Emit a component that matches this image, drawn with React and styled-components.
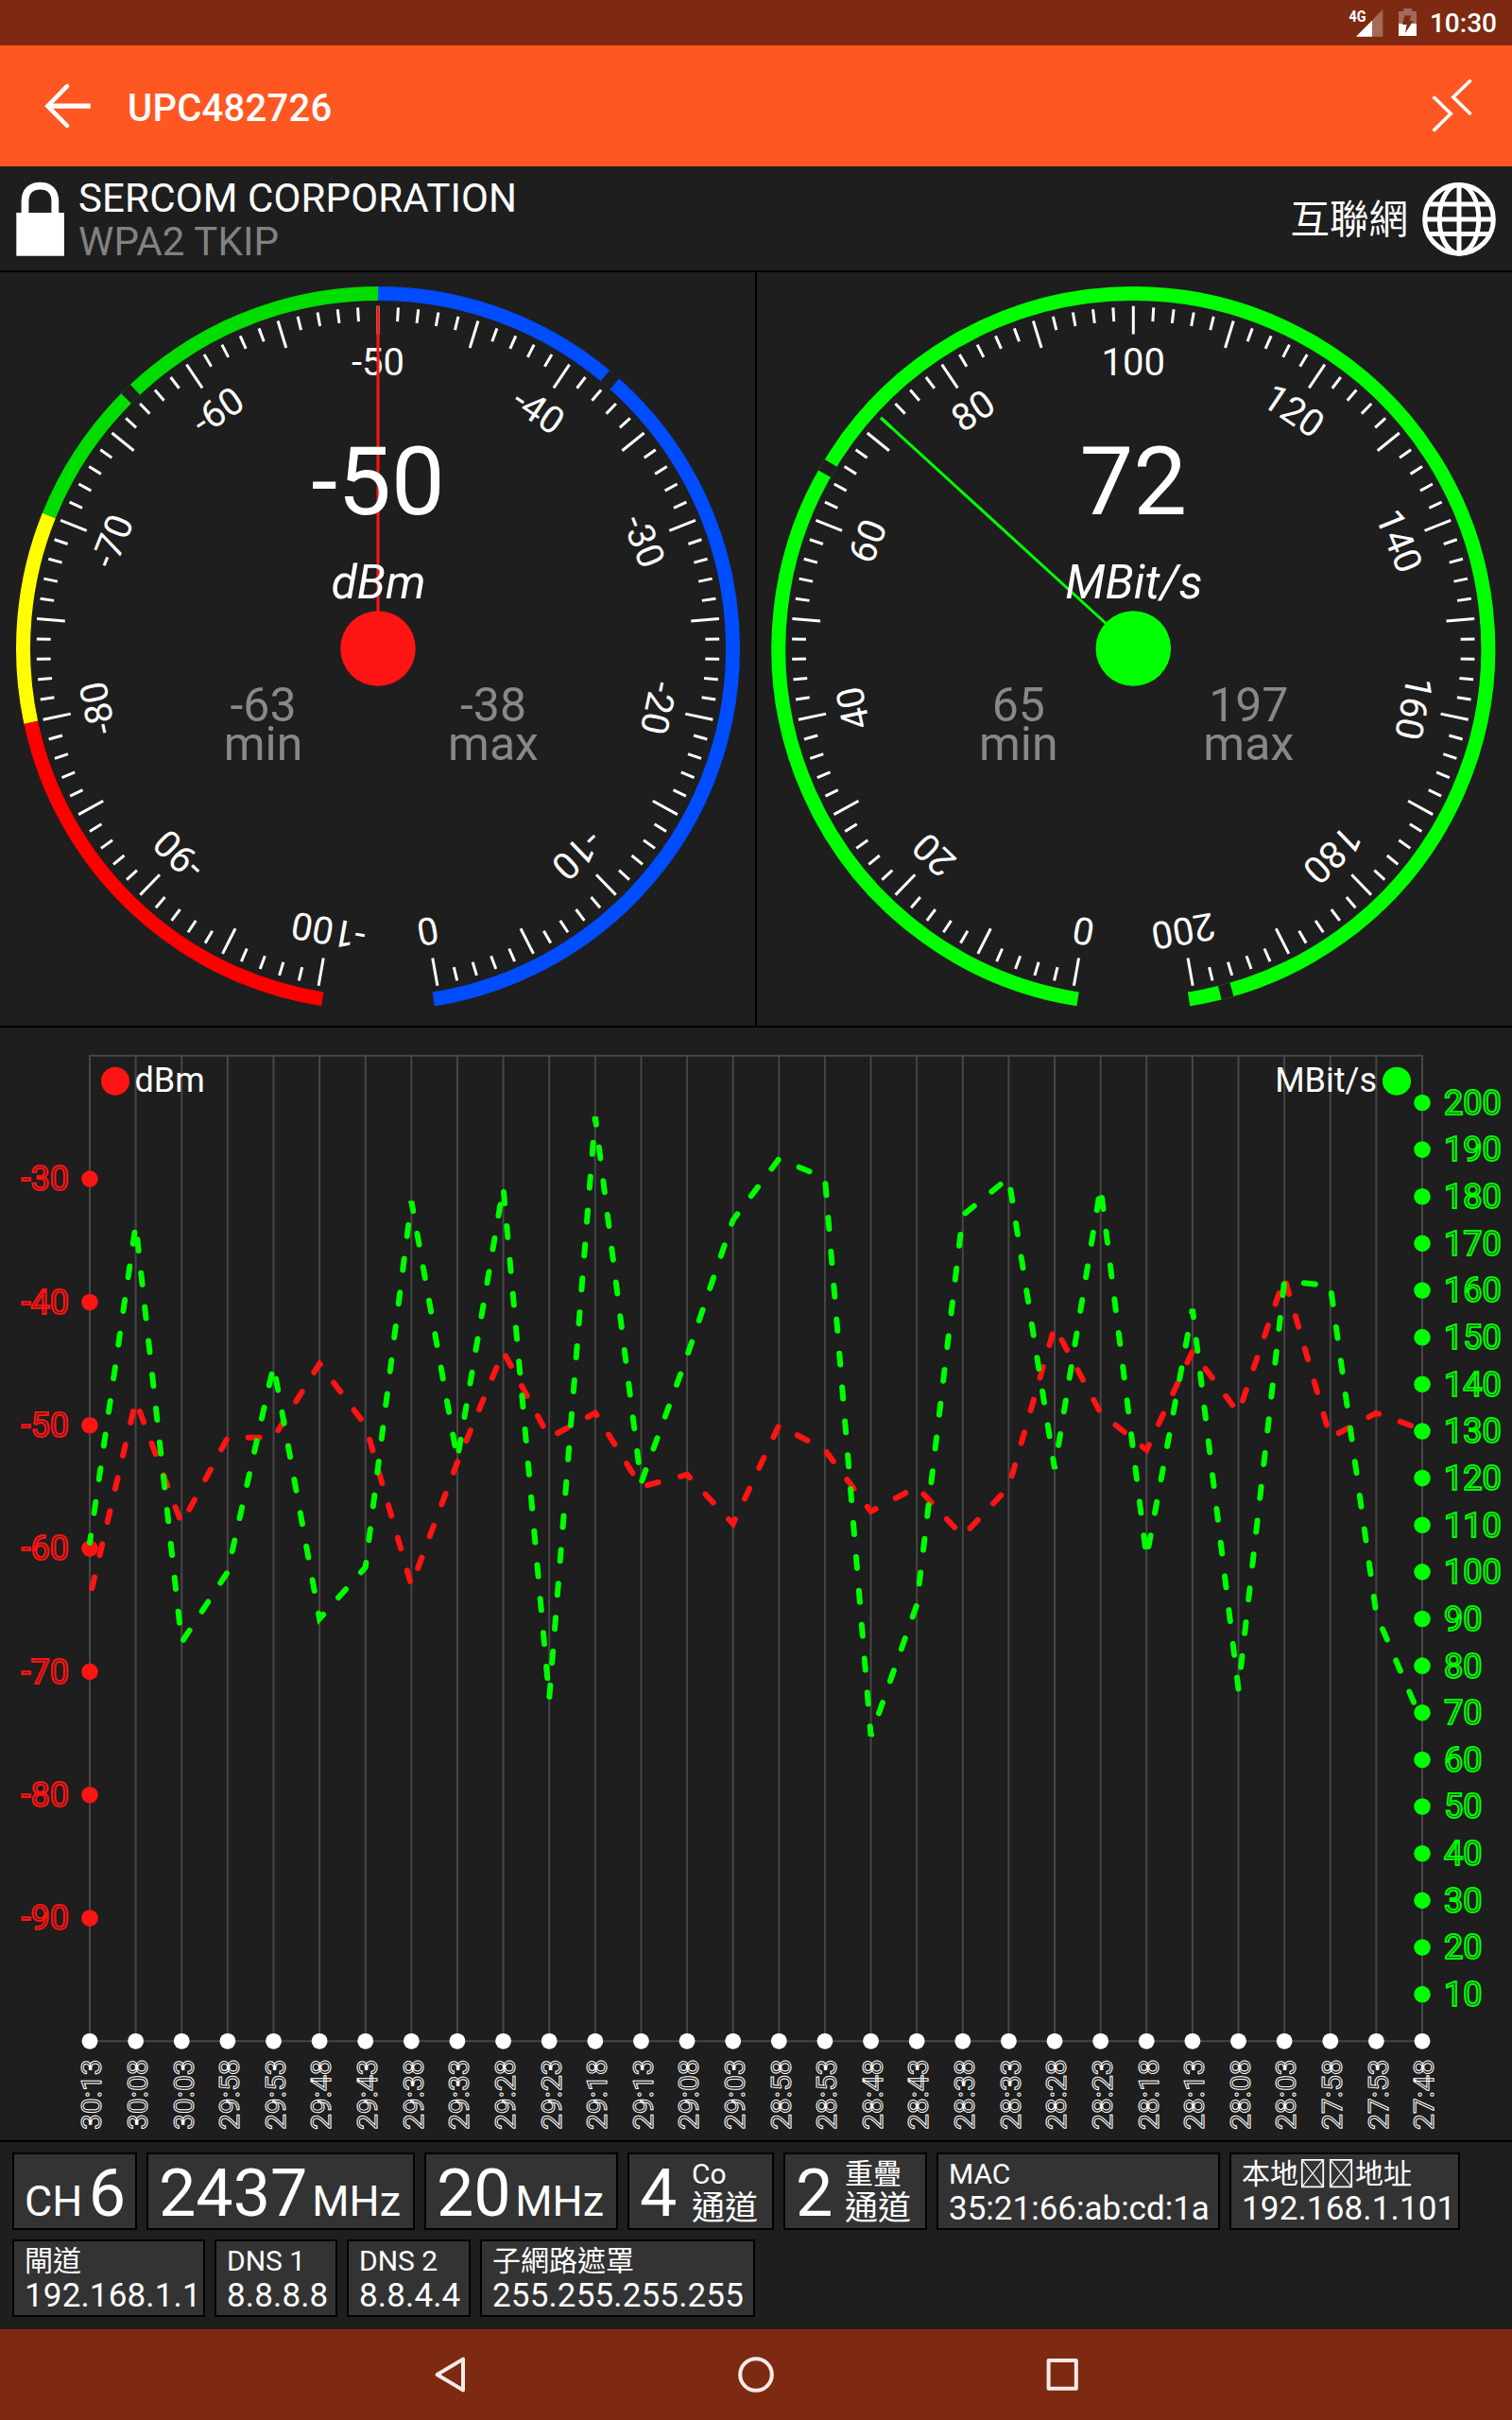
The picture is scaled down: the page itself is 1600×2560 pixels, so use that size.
import React from "react";
import styled, { createGlobalStyle } from "styled-components";

const FONT = `Roboto, "Noto Sans CJK TC", sans-serif`;
const BG = "#1e1e1e";

const GlobalStyle = createGlobalStyle`
  html, body { margin: 0; padding: 0; background: ${BG}; }
  * { box-sizing: border-box; }
`;

const Screen = styled.div`
  display: flex;
  flex-direction: column;
  width: 1600px;
  height: 2560px;
  overflow: hidden;
  background: ${BG};
  color: #fff;
  font-family: ${FONT};
`;

const StatusBar = styled.div`
  display: flex;
  flex: none;
  height: 48px;
  justify-content: flex-end;
  align-items: center;
  padding-right: 16px;
  background: #7e2a12;
`;

const StatusIcons = styled.svg`
  display: block;
  width: 80px;
  height: 48px;
  margin-right: 11px;
`;

const Clock = styled.div`
  font-size: 28px;
  font-weight: 500;
  line-height: 48px;
  padding-top: 2px;
`;

const AppBar = styled.header`
  display: flex;
  flex: none;
  align-items: center;
  height: 128px;
  padding: 0 32px;
  background: #ff5722;
`;

const BarIcon = styled.svg`
  display: block;
  width: 64px;
  height: 64px;
`;

const Title = styled.h1`
  flex: 1;
  margin: 0 0 0 39px;
  font-size: 40px;
  font-weight: 500;
  line-height: 64px;
  padding-top: 5px;
  letter-spacing: 0.25px;
`;

const NetworkHeader = styled.section`
  display: flex;
  flex: none;
  height: 112px;
  align-items: center;
  padding: 0 16px;
  border-bottom: 2px solid #000;
`;

const HeaderIcon = styled.svg`
  display: block;
  width: ${(p) => p.$w}px;
  height: 80px;
`;

const Vendor = styled.div`
  flex: 1;
  margin-left: 14px;
  padding-top: 4px;
`;

const VendorLine = styled.div`
  font-size: 42px;
  letter-spacing: 0.15px;
  line-height: 46px;
  color: ${(p) => (p.$dim ? "#828282" : "#fff")};
`;

const Internet = styled.div`
  font-size: 41.5px;
  line-height: 46px;
  padding-top: 3px;
  margin-right: 14px;
`;

const GaugeRow = styled.section`
  display: grid;
  flex: none;
  grid-template-columns: 799px 799px;
  column-gap: 2px;
  height: 799px;
  border-bottom: 2px solid #000;
  background: #000;
`;

const GaugeSvg = styled.svg`
  display: block;
  width: 799px;
  height: 797px;
  background: ${BG};
  font-family: ${FONT};
`;

const ChartSvg = styled.svg`
  display: block;
  flex: none;
  width: 1600px;
  height: 1177px;
  font-family: ${FONT};
`;

const InfoPanel = styled.section`
  display: flex;
  flex: none;
  flex-direction: column;
  gap: 10px;
  height: 200px;
  padding: 11px 13px 0;
  border-top: 2px solid #000;
`;

const ChipRow = styled.div`
  display: flex;
  gap: 10px;
`;

const Chip = styled.div`
  display: flex;
  justify-content: space-between;
  align-items: ${(p) => (p.$stack ? "flex-start" : "baseline")};
  width: ${(p) => p.$w}px;
  height: 82px;
  padding: 0 10px 0 11px;
  border: 2px solid #000;
  background: #333;
  white-space: nowrap;
`;

const BigValue = styled.span`
  font-size: 70px;
  line-height: 82px;
`;

const Unit = styled.span`
  font-size: 45px;
  line-height: 70px;
  margin-right: ${(p) => (p.$after ? 3 : 0)}px;
`;

const Stack = styled.div`
  padding-top: 2px;
  margin-right: ${(p) => p.$inset || 0}px;
`;

const ChipLabel = styled.div`
  display: flex;
  font-size: 30px;
  line-height: 38px;
`;

const ChipText = styled.div`
  font-size: 35px;
  line-height: 35px;
  letter-spacing: ${(p) => p.$spacing || 0}px;
`;

const MissingGlyph = styled.svg`
  display: block;
  width: 30px;
  height: 38px;
`;

const NavBar = styled.nav`
  display: flex;
  flex: none;
  justify-content: center;
  align-items: center;
  gap: 276px;
  height: 96px;
  background: #7e2a12;
`;

const NavIcon = styled.svg`
  display: block;
  width: 48px;
  height: 48px;
  fill: none;
  stroke: #f5ebe8;
  stroke-width: 4;
  stroke-linejoin: round;
`;

const SWEEP = 170;
const CY = 398;

const polar = (cx, r, deg) => {
  const a = (deg * Math.PI) / 180;
  return [cx + r * Math.sin(a), CY - r * Math.cos(a)];
};

const arc = (cx, r, from, to) => {
  const [x1, y1] = polar(cx, r, from);
  const [x2, y2] = polar(cx, r, to);
  return `M${x1} ${y1}A${r} ${r} 0 ${to - from > 180 ? 1 : 0} 1 ${x2} ${y2}`;
};

function Gauge({ cx, from, to, value, min, max, unit, color, bands }) {
  const angle = (v) => ((v - from) / (to - from)) * 2 * SWEEP - SWEEP;
  const steps = Array.from({ length: 101 }, (_, i) => i);
  const [nx, ny] = polar(cx, 362, angle(value));
  return (
    <GaugeSvg viewBox="0 0 799 797">
      {bands.map((b) => (
        <path key={b.start} d={arc(cx, 375.5, b.start, b.end)} stroke={b.color} strokeWidth="15" fill="none" />
      ))}
      {[min, max].map((v) => (
        <path key={v} d={arc(cx, 375.5, angle(v) - 1, angle(v) + 1)} stroke={BG} strokeWidth="15" fill="none" />
      ))}
      {steps.map((i) => {
        const a = (i / 100) * 2 * SWEEP - SWEEP;
        const long = i % 5 === 0;
        const [x1, y1] = polar(cx, long ? 362.3 : 361.3, a);
        const [x2, y2] = polar(cx, long ? 332.5 : 346.5, a);
        return <line key={i} x1={x1} y1={y1} x2={x2} y2={y2} stroke="#fff" strokeWidth="3" />;
      })}
      {steps
        .filter((i) => i % 10 === 0)
        .map((i) => (
          <text
            key={i}
            x={cx}
            y={CY - 289.5}
            fill="#fff"
            fontSize="40"
            textAnchor="middle"
            transform={`rotate(${(i / 100) * 2 * SWEEP - SWEEP} ${cx} ${CY})`}
          >
            {from + (i / 100) * (to - from)}
          </text>
        ))}
      <line x1={cx} y1={CY} x2={nx} y2={ny} stroke={color} strokeWidth="3" />
      <circle cx={cx} cy={CY} r="39.8" fill={color} />
      <g textAnchor="middle" fill="#fff">
        <text x={cx} y="256" fontSize="101">{value}</text>
        <text x={cx + 0.5} y="344.7" fontSize="50" fontStyle="italic">{unit}</text>
      </g>
      <g textAnchor="middle" fill="#888" fontSize="50">
        <text x={cx - 121.5} y="475">{min}</text>
        <text x={cx - 121.5} y="516.3">min</text>
        <text x={cx + 122} y="475">{max}</text>
        <text x={cx + 122} y="516.3">max</text>
      </g>
    </GaugeSvg>
  );
}

const SIGNAL = [
  -64, -48, -58, -51, -51, -45, -50, -63, -53, -44, -51, -49, -55, -54, -58, -50, -52, -57, -55, -59, -55, -42, -49,
  -52, -44, -49, -38, -51, -49, -50.35,
];
const SPEED = [
  106.2, 174, 85, 100, 144, 90, 101, 179, 124, 182, 73, 197, 119, 146, 175, 188, 184, 65, 93, 176, 184, 122, 182, 103,
  156, 75, 162, 161, 91, 68,
];

const LEFT = 95;
const RIGHT = 1505;
const TOP = 29.8;
const BOTTOM = 1072.3;
const colX = (i) => LEFT + (i * (RIGHT - LEFT)) / 29;
const signalY = (v) => BOTTOM - ((v + 100) / 80) * (BOTTOM - TOP);
const speedY = (v) => BOTTOM - (v / 210) * (BOTTOM - TOP);
const points = (data, y) => data.map((v, i) => `${colX(i)},${y(v)}`).join(" ");

const timeLabel = (i) => {
  const s = 30 * 60 + 13 - i * 5;
  return `${Math.floor(s / 60)}:${String(s % 60).padStart(2, "0")}`;
};

function Chart() {
  const columns = SIGNAL.map((_, i) => i);
  const signalTicks = [-30, -40, -50, -60, -70, -80, -90];
  const speedTicks = Array.from({ length: 20 }, (_, i) => (i + 1) * 10);
  return (
    <ChartSvg viewBox="0 0 1600 1177">
      <g stroke="#464646" strokeWidth="2">
        <line x1={LEFT} y1={TOP} x2={RIGHT} y2={TOP} />
        <line x1={LEFT} y1={BOTTOM} x2={RIGHT} y2={BOTTOM} />
        {columns.map((i) => (
          <line key={i} x1={colX(i)} y1={TOP - 1} x2={colX(i)} y2={BOTTOM} />
        ))}
      </g>
      <g fill="#fff">
        {columns.map((i) => (
          <circle key={i} cx={colX(i)} cy={BOTTOM} r="8.4" />
        ))}
      </g>
      <g fill="none" stroke="#fff" strokeWidth="1" fontSize="30" textAnchor="end">
        {columns.map((i) => (
          <text key={i} transform={`translate(${colX(i) + 12.3} 1091.3) rotate(-90)`}>{timeLabel(i)}</text>
        ))}
      </g>
      <g fill="#ff1414">
        {signalTicks.map((v) => (
          <circle key={v} cx={LEFT} cy={signalY(v)} r="8.8" />
        ))}
      </g>
      <g fill="none" stroke="#ff1414" strokeWidth="2" fontSize="36" textAnchor="end">
        {signalTicks.map((v) => (
          <text key={v} x="73" y={signalY(v) + 12.2}>{v}</text>
        ))}
      </g>
      <g fill="none" strokeWidth="6" strokeLinecap="round" strokeDasharray="12 24">
        <polyline points={points(SIGNAL, signalY)} stroke="#ff1414" strokeDashoffset="-10.3" />
        <polyline points={points(SPEED, speedY)} stroke="#00ff00" strokeDashoffset="4.3" />
      </g>
      <g fill="#00ff00">
        {speedTicks.map((v) => (
          <circle key={v} cx={RIGHT} cy={speedY(v)} r="8.8" />
        ))}
      </g>
      <g fill="none" stroke="#00ff00" strokeWidth="2" fontSize="36">
        {speedTicks.map((v) => (
          <text key={v} x="1528" y={speedY(v) + 12.4}>{v}</text>
        ))}
      </g>
      <circle cx="122" cy="56.7" r="15" fill="#ff1414" />
      <circle cx="1478" cy="56.7" r="15" fill="#00ff00" />
      <g fill="#fff" fontSize="36">
        <text x="142.5" y="68">dBm</text>
        <text x="1457" y="68" textAnchor="end">MBit/s</text>
      </g>
    </ChartSvg>
  );
}

function Tofu() {
  return (
    <MissingGlyph viewBox="0 0 30 38" fill="none" stroke="#fff" strokeWidth="1.8">
      <path d="M3.8 3.8h22.4v28.6H3.8z" />
      <path d="M3.8 3.8l22.4 28.6M26.2 3.8L3.8 32.4" strokeWidth="1.2" />
    </MissingGlyph>
  );
}

function Detail({ w, label, spacing, children }) {
  return (
    <Chip $w={w} $stack>
      <Stack>
        <ChipLabel>{label}</ChipLabel>
        <ChipText $spacing={spacing}>{children}</ChipText>
      </Stack>
    </Chip>
  );
}

function Count({ w, value, label }) {
  return (
    <Chip $w={w} $stack>
      <BigValue>{value}</BigValue>
      <Stack $inset={5}>
        <ChipLabel>{label}</ChipLabel>
        <ChipText>通道</ChipText>
      </Stack>
    </Chip>
  );
}

export default function App() {
  return (
    <>
      <GlobalStyle />
      <Screen>
        <StatusBar>
          <StatusIcons viewBox="0 0 80 48">
            <text x="5.5" y="22.8" fontSize="17" fontWeight="700" fill="#fff" textLength="18" lengthAdjust="spacingAndGlyphs">
              4G
            </text>
            <path d="M13 38.7L41.3 10v28.7z" fill="#fff" opacity=".3" />
            <path d="M13 38.7L30 21.7v17z" fill="#fff" />
            <path d="M63.2 9h8.8v3h5v13H58V12h5.2z" fill="#fff" opacity=".3" />
            <path d="M58 25h19v13H58z" fill="#fff" />
            <path d="M64.5 16.5h7l-2 5.5h4l-8.5 13 1.5-9h-4.5z" fill="#7e2a12" />
          </StatusIcons>
          <Clock>10:30</Clock>
        </StatusBar>
        <AppBar>
          <BarIcon viewBox="0 0 64 64" fill="none" stroke="#fff" strokeWidth="4.6" strokeLinecap="round">
            <path d="M39 11.2L18.4 32.2L39 53" />
            <path d="M19 32.2H63.8" strokeLinecap="butt" strokeWidth="5.2" />
          </BarIcon>
          <Title>UPC482726</Title>
          <BarIcon viewBox="0 0 64 64" fill="none" stroke="#fff" strokeWidth="3.6">
            <path d="M12.7 22.3L31.2 40.3L12.7 58.5M52.5 4.7L33.8 22.8L52.5 41" />
          </BarIcon>
        </AppBar>
        <NetworkHeader>
          <HeaderIcon $w={53} viewBox="0 0 53 80">
            <path d="M1.3 34h50.6v45.8H1.3z" fill="#fff" />
            <path d="M10.5 36V22C10.5 11 17 5.6 26.5 5.6S42.3 11 42.3 22V36" fill="none" stroke="#fff" strokeWidth="7.8" />
          </HeaderIcon>
          <Vendor>
            <VendorLine>SERCOM CORPORATION</VendorLine>
            <VendorLine $dim>WPA2 TKIP</VendorLine>
          </Vendor>
          <Internet>互聯網</Internet>
          <HeaderIcon $w={80} viewBox="0 0 80 80" fill="none" stroke="#fff" strokeWidth="5">
            <circle cx="40" cy="40.9" r="36.3" />
            <ellipse cx="40" cy="40.9" rx="20.8" ry="36.3" />
            <path d="M40 4V78M3 40.9H77M8 25H72M8 56.6H72" />
          </HeaderIcon>
        </NetworkHeader>
        <GaugeRow>
          <Gauge
            cx={400}
            from={-100}
            to={0}
            value={-50}
            min={-63}
            max={-38}
            unit="dBm"
            color="#ff1414"
            bands={[
              { start: -171, end: -102, color: "#ff0000" },
              { start: -102, end: -68, color: "#ffff00" },
              { start: -68, end: 0, color: "#00dd00" },
              { start: 0, end: 171, color: "#004cff" },
            ]}
          />
          <Gauge
            cx={398.3}
            from={0}
            to={200}
            value={72}
            min={65}
            max={197}
            unit="MBit/s"
            color="#00ff00"
            bands={[{ start: -171, end: 171, color: "#00ff00" }]}
          />
        </GaugeRow>
        <Chart />
        <InfoPanel>
          <ChipRow>
            <Chip $w={132}>
              <Unit>CH</Unit>
              <BigValue>6</BigValue>
            </Chip>
            <Chip $w={284}>
              <BigValue>2437</BigValue>
              <Unit $after>MHz</Unit>
            </Chip>
            <Chip $w={205}>
              <BigValue>20</BigValue>
              <Unit $after>MHz</Unit>
            </Chip>
            <Count w={155} value="4" label="Co" />
            <Count w={152} value="2" label="重疊" />
            <Detail w={300} label="MAC">35:21:66:ab:cd:1a</Detail>
            <Detail
              w={244}
              spacing={0.15}
              label={
                <>
                  本地
                  <Tofu />
                  <Tofu />
                  地址
                </>
              }
            >
              192.168.1.101
            </Detail>
          </ChipRow>
          <ChipRow>
            <Detail w={204} spacing={0.15} label="閘道">192.168.1.1</Detail>
            <Detail w={130} spacing={0.15} label="DNS 1">8.8.8.8</Detail>
            <Detail w={131} spacing={0.15} label="DNS 2">8.8.4.4</Detail>
            <Detail w={291} spacing={0.15} label="子網路遮罩">255.255.255.255</Detail>
          </ChipRow>
        </InfoPanel>
        <NavBar>
          <NavIcon viewBox="0 0 48 48">
            <path d="M38 7.6V40.4L10.6 24z" />
          </NavIcon>
          <NavIcon viewBox="0 0 48 48">
            <circle cx="24" cy="24" r="16.8" />
          </NavIcon>
          <NavIcon viewBox="0 0 48 48">
            <rect x="9.6" y="9" width="29.2" height="29.8" />
          </NavIcon>
        </NavBar>
      </Screen>
    </>
  );
}
